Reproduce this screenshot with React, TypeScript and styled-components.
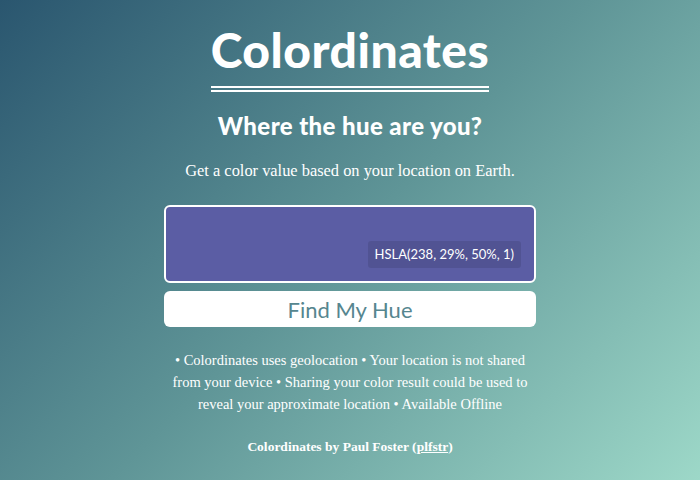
import React from "react"
import styled, { createGlobalStyle } from "styled-components"

const hue = { h: 238, s: 29, l: 50, a: 1 }

const notes = [
  "Colordinates uses geolocation",
  "Your location is not shared from your device",
  "Sharing your color result could be used to reveal your approximate location",
  "Available Offline",
]

export default function App() {
  const value = `HSLA(${hue.h}, ${hue.s}%, ${hue.l}%, ${hue.a})`
  return (
    <>
      <GlobalStyle />
      <Page>
        <Main>
          <Title>Colordinates</Title>
          <Rule />
          <Tagline>Where the hue are you?</Tagline>
          <Intro>Get a color value based on your location on Earth.</Intro>
          <Swatch style={{ background: `hsla(${hue.h}, ${hue.s}%, ${hue.l}%, ${hue.a})` }}>
            <Value>{value}</Value>
          </Swatch>
          <FindButton>Find My Hue</FindButton>
          <Notes>
            {notes.map((n) => `• ${n}`).join(" ")}
          </Notes>
          <Credit>
            Colordinates by Paul Foster (<a href="#">plfstr</a>)
          </Credit>
        </Main>
      </Page>
    </>
  )
}

const GlobalStyle = createGlobalStyle`
  html, body {
    margin: 0;
    padding: 0;
  }
  body {
    font-family: "Liberation Serif", serif;
  }
`

const Page = styled.div`
  min-height: 480px;
  display: flex;
  justify-content: center;
  background: linear-gradient(135deg, #2a566f 0%, #5f9597 50%, #9dd8c8 100%);
  color: #fff;
`

const Main = styled.main`
  width: 372px;
  padding-top: 22px;
  display: flex;
  flex-direction: column;
  align-items: center;
  text-align: center;
`

const Title = styled.h1`
  margin: 0;
  font-family: Lato, "Noto Sans", sans-serif;
  font-weight: 900;
  font-size: 48px;
  line-height: 56px;
  letter-spacing: 0.5px;
`

const Rule = styled.div`
  width: 278px;
  height: 2px;
  margin-top: 8px;
  border-top: 2px solid #fff;
  border-bottom: 2px solid #fff;
`

const Tagline = styled.h2`
  margin: 20px 0 0;
  font-family: Lato, "Noto Sans", sans-serif;
  font-weight: 900;
  font-size: 24px;
  line-height: 28px;
  letter-spacing: 0.4px;
`

const Intro = styled.p`
  margin: 20px 0 0;
  font-size: 16.4px;
  line-height: 22px;
`

const Swatch = styled.div`
  box-sizing: border-box;
  width: 100%;
  height: 78px;
  margin-top: 23px;
  border: 2px solid #fff;
  border-radius: 6px;
  display: flex;
  align-items: flex-end;
  justify-content: flex-end;
  padding: 0 13px 13px 0;
`

const Value = styled.span`
  background: rgba(0, 0, 0, 0.1);
  border-radius: 3px;
  padding: 0 7px;
  height: 27px;
  line-height: 27px;
  font-family: Lato, "Noto Sans", sans-serif;
  font-size: 13px;
  color: #fff;
`

const FindButton = styled.button`
  width: 100%;
  height: 36px;
  margin-top: 8px;
  border: 0;
  border-radius: 6px;
  background: #fff;
  color: #56868f;
  font-family: Lato, "Noto Sans", sans-serif;
  font-size: 22px;
  cursor: pointer;
`

const Notes = styled.p`
  width: 366px;
  margin: 22px 0 0;
  font-size: 14.5px;
  line-height: 22px;
`

const Credit = styled.p`
  margin: 24px 0 0;
  font-size: 13.5px;
  font-weight: bold;
  a {
    color: #fff;
  }
`
